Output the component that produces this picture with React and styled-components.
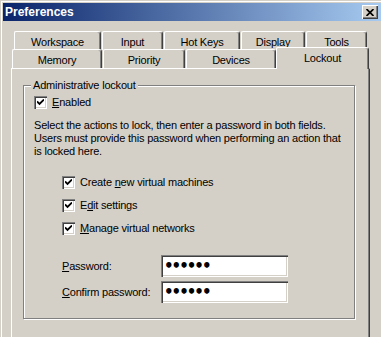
import styled, { createGlobalStyle } from "styled-components";

// ─── Estilos ──────────────────────────────────────────────────────────────

const GlobalStyle = createGlobalStyle`
  html, body {
    margin: 0;
    padding: 0;
    background: #d4d0c8;
    overflow: hidden;
  }
`;

const Window = styled.div`
  width: 381px;
  height: 337px;
  box-sizing: border-box;
  padding: 3px 0 0 3px;
  background: #d4d0c8;
  box-shadow: inset 1px 1px #d4d0c8, inset 2px 2px #ffffff;
  font-family: "Liberation Sans", Arial, sans-serif;
  font-size: 11px;
  letter-spacing: -0.2px;
  color: #000;
  overflow: hidden;
`;

const TitleBar = styled.div`
  height: 18px;
  display: flex;
  align-items: center;
  justify-content: space-between;
  padding: 0 3px 0 2px;
  background: linear-gradient(to right, #0a246a, #a6caf0);
`;

const Title = styled.span`
  color: #fff;
  font-weight: 700;
  font-size: 12px;
  letter-spacing: 0;
`;

const CloseBtn = styled.div`
  width: 16px;
  height: 14px;
  box-sizing: border-box;
  display: flex;
  align-items: center;
  justify-content: center;
  background: #d4d0c8;
  box-shadow: inset 1px 1px #fff, inset -1px -1px #404040, inset -2px -2px #808080;
`;

const Body = styled.div`
  padding: 10px 0 0 8px;
`;

const TabRow = styled.div`
  display: flex;
  gap: 1px;
  height: ${(p) => p.$h}px;
  padding-left: ${(p) => p.$indent}px;
`;

const Tab = styled.div`
  width: ${(p) => p.$w}px;
  height: ${(p) => (p.$active ? 22 : 19)}px;
  margin-top: ${(p) => (p.$active ? -2 : 0)}px;
  margin-left: ${(p) => (p.$active ? -1 : 0)}px;
  box-sizing: border-box;
  padding-top: 4px;
  line-height: 13px;
  text-align: center;
  background: #d4d0c8;
  border-top: 1px solid #fff;
  border-left: 1px solid #fff;
  border-right: 1px solid #404040;
  border-radius: 2px 3px 0 0;
  box-shadow: inset -1px 0 #808080;
  position: ${(p) => (p.$active ? "relative" : "static")};
  z-index: ${(p) => (p.$active ? 2 : 0)};
`;

const Panel = styled.div`
  width: 359px;
  height: 280px;
  box-sizing: border-box;
  padding: 10px 0 0 11px;
  border-top: 1px solid #fff;
  border-left: 1px solid #fff;
  border-right: 1px solid #404040;
  box-shadow: inset -1px 0 #808080;
`;

const Group = styled.fieldset`
  width: 332px;
  box-sizing: border-box;
  margin: 0;
  padding: 4px 0 15px 10px;
  border: 1px solid #808080;
  box-shadow: inset 1px 1px #fff, 1px 1px #fff;
`;

const Legend = styled.legend`
  margin-left: -3px;
  padding: 0 2px;
  line-height: 13px;
  background: #d4d0c8;
`;

const CheckRow = styled.label`
  display: flex;
  align-items: center;
  gap: 5px;
  height: 13px;
  line-height: 13px;
`;

const Box = styled.span`
  width: 13px;
  height: 13px;
  box-sizing: border-box;
  display: flex;
  align-items: center;
  justify-content: center;
  background: #fff;
  box-shadow: inset 1px 1px #808080, inset 2px 2px #404040, inset -1px -1px #fff,
    inset -2px -2px #d4d0c8;
`;

const Description = styled.p`
  margin: 10px 0 0;
  line-height: 13px;
`;

const Options = styled.div`
  display: flex;
  flex-direction: column;
  gap: 10px;
  margin: 18px 0 0 28px;
`;

const Fields = styled.div`
  display: grid;
  grid-template-columns: 99px 127px;
  row-gap: 4px;
  align-items: center;
  margin: 20px 0 0 28px;
`;

const FieldLabel = styled.label`
  line-height: 13px;
`;

const PasswordInput = styled.input`
  width: 127px;
  height: 22px;
  box-sizing: border-box;
  margin: 0;
  padding: 0 0 0 3px;
  border: none;
  outline: none;
  background: #fff;
  box-shadow: inset 1px 1px #808080, inset 2px 2px #404040, inset -1px -1px #fff,
    inset -2px -2px #d4d0c8;
  font-family: "DejaVu Sans", sans-serif;
  font-size: 15px;
  font-weight: 700;
  letter-spacing: -2px;
  color: #000;
`;

// ─── Componente ───────────────────────────────────────────────────────────

const Check = () => (
  <svg width="7" height="7" viewBox="0 0 7 7">
    <path d="M0 2.5 L2.5 5 L7 0.5" stroke="#000" strokeWidth="1.8" fill="none" />
  </svg>
);

const Key = ({ children }) => <u>{children}</u>;

const backTabs = [
  ["Workspace", 87],
  ["Input", 61],
  ["Hot Keys", 76],
  ["Display", 64],
  ["Tools", 61],
];

const frontTabs = [
  ["Memory", 90],
  ["Priority", 82],
  ["Devices", 90],
];

export default function App() {
  return (
    <>
      <GlobalStyle />
      <Window>
        <TitleBar>
          <Title>Preferences</Title>
          <CloseBtn>
            <svg width="8" height="7" viewBox="0 0 8 7">
              <path d="M0.5 0 L7.5 7 M7.5 0 L0.5 7" stroke="#000" strokeWidth="1.7" />
            </svg>
          </CloseBtn>
        </TitleBar>

        <Body>
          <TabRow $h={18} $indent={3}>
            {backTabs.map(([t, w]) => (
              <Tab key={t} $w={w}>{t}</Tab>
            ))}
          </TabRow>
          <TabRow $h={19} $indent={1}>
            {frontTabs.map(([t, w]) => (
              <Tab key={t} $w={w}>{t}</Tab>
            ))}
            <Tab $w={93} $active>Lockout</Tab>
          </TabRow>

          <Panel>
            <Group>
              <Legend>Administrative lockout</Legend>
              <CheckRow>
                <Box><Check /></Box>
                <span><Key>E</Key>nabled</span>
              </CheckRow>
              <Description>
                Select the actions to lock, then enter a password in both fields.
                <br />
                Users must provide this password when performing an action that
                <br />
                is locked here.
              </Description>

              <Options>
                <CheckRow>
                  <Box><Check /></Box>
                  <span>Create <Key>n</Key>ew virtual machines</span>
                </CheckRow>
                <CheckRow>
                  <Box><Check /></Box>
                  <span>E<Key>d</Key>it settings</span>
                </CheckRow>
                <CheckRow>
                  <Box><Check /></Box>
                  <span><Key>M</Key>anage virtual networks</span>
                </CheckRow>
              </Options>

              <Fields>
                <FieldLabel><Key>P</Key>assword:</FieldLabel>
                <PasswordInput type="password" value="secret" readOnly />
                <FieldLabel><Key>C</Key>onfirm password:</FieldLabel>
                <PasswordInput type="password" value="secret" readOnly />
              </Fields>
            </Group>
          </Panel>
        </Body>
      </Window>
    </>
  );
}
